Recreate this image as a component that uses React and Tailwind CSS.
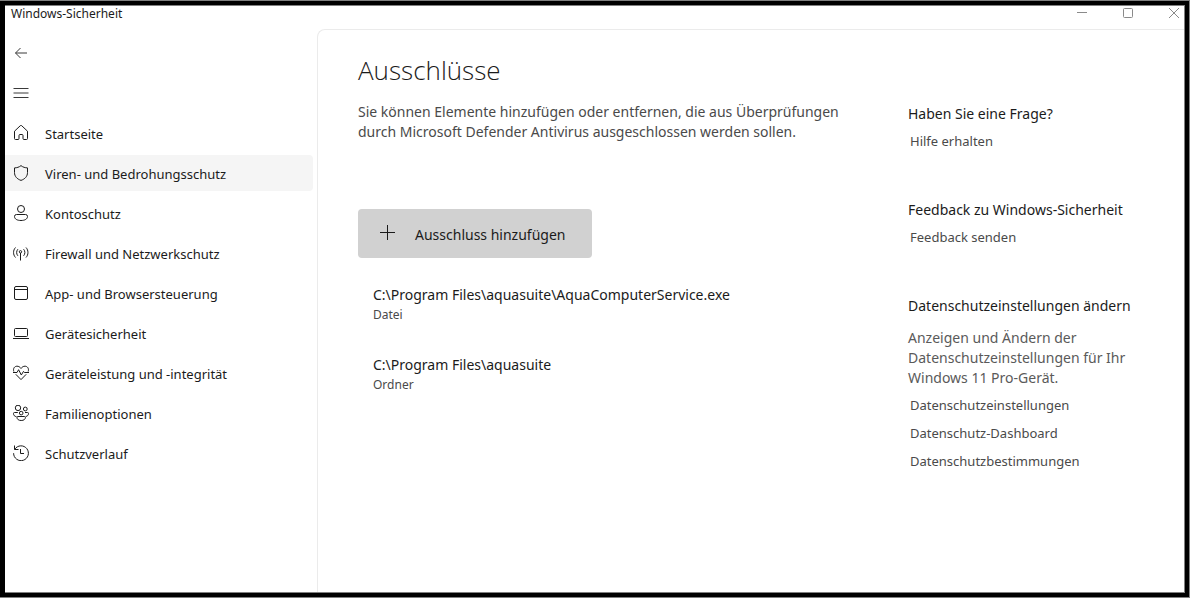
const navItems = [
  {
    label: "Startseite",
    icon: (
      <path d="M1.500 6.200 7.300.7q.7-.6 1.400 0l5.800 5.500v7.300q0 1-1 1H11q-1 0-1-1V10.500q0-1-1-1H7q-1 0-1 1v3q0 1-1 1H2.500q-1 0-1-1Z" />
    ),
  },
  {
    label: "Viren- und Bedrohungsschutz",
    icon: <path d="M8 .6c1.900 1.600 4.100 2.200 6.500 2.300v4.600c0 3.900-2.500 6.500-6.500 7.900-4-1.400-6.500-4-6.500-7.900V2.900C3.900 2.800 6.100 2.200 8 .6Z" />,
    current: true,
  },
  {
    label: "Kontoschutz",
    icon: (
      <>
        <circle cx="8" cy="4" r="3.500" />
        <path d="M3.500 9.500h9q2 0 2 2c0 2.500-2.700 4-6.500 4s-6.500-1.500-6.500-4q0-2 2-2Z" />
      </>
    ),
  },
  {
    label: "Firewall und Netzwerkschutz",
    icon: (
      <>
        <path d="M2.500 2.500c-2.600 2.800-2.600 7.200 0 10M4.900 4.200c-1.700 1.900-1.700 4.700 0 6.600M13 2.500c2.600 2.800 2.600 7.200 0 10M10.600 4.200c1.700 1.900 1.700 4.700 0 6.600M7.500 8v7.500" />
        <circle cx="7.500" cy="6.800" r="1.200" />
      </>
    ),
  },
  {
    label: "App- und Browsersteuerung",
    icon: (
      <>
        <rect x="1.500" y="1.500" width="13" height="13" rx="1.500" />
        <path d="M1.500 4.500h13" />
      </>
    ),
  },
  {
    label: "Gerätesicherheit",
    icon: (
      <>
        <rect x="1.500" y="3.500" width="13" height="8" rx="1" />
        <path d="M0 13.500h16" />
      </>
    ),
  },
  {
    label: "Geräteleistung und -integrität",
    icon: (
      <>
        <path d="M.8 6.500C-.2 3.200 1.800 1.200 4 1.200c1.700 0 3 .8 4 2.300 1-1.500 2.300-2.300 4-2.300 2.200 0 4.200 2 3.200 5.300M2.800 9.300 8 14.600l5.200-5.300" />
        <path d="M0 7.500h4l1.600-2.800L8.300 10l2.200-3.600 1 1.100H16" />
      </>
    ),
  },
  {
    label: "Familienoptionen",
    icon: (
      <>
        <circle cx="5" cy="2.900" r="2.700" />
        <circle cx="12.300" cy="4" r="1.900" />
        <circle cx="8.200" cy="8.100" r="1.800" />
        <path d="M4.800 7.500H1.500Q.5 7.500.5 8.500c0 1.800 1 2.900 3 3.200M12 7.500h2.500q1 0 1 1c0 1.600-1 2.700-2.700 3M5 11.500h6.500q.9 0 .9.900c0 1.900-1.600 3.100-4.200 3.100S4 14.300 4 12.400q0-.9 1-.9Z" />
      </>
    ),
  },
  {
    label: "Schutzverlauf",
    icon: (
      <>
        <path d="M1.800 4.200A7.400 7.400 0 1 1 .6 8.200" />
        <path d="M1.500.5v4h4M7.500 4v4.500H11" />
      </>
    ),
  },
];

const exclusions = [
  { path: "C:\\Program Files\\aquasuite\\AquaComputerService.exe", kind: "Datei" },
  { path: "C:\\Program Files\\aquasuite", kind: "Ordner" },
];

const privacyLinks = ["Datenschutzeinstellungen", "Datenschutz-Dashboard", "Datenschutzbestimmungen"];

function Icon({ children, className = "" }) {
  return (
    <svg
      viewBox="0 0 16 16"
      width="16"
      height="16"
      fill="none"
      stroke="currentColor"
      strokeLinejoin="round"
      aria-hidden="true"
      className={`shrink-0 ${className}`}
    >
      {children}
    </svg>
  );
}

function CaptionButton({ label, children }) {
  return (
    <button type="button" aria-label={label} className="flex w-5 items-center justify-center text-[#8a8a8a]">
      <Icon>{children}</Icon>
    </button>
  );
}

function HelpSection({ title, text, links }) {
  return (
    <section>
      <h2 className="text-sm leading-7 text-[#1b1b1b]">{title}</h2>
      {text && <p className="mb-1 mt-2 max-w-[230px] text-sm leading-5 text-[#5a5a5a]">{text}</p>}
      <ul className="flex flex-col gap-0.5 pl-0.5">
        {links.map((label) => (
          <li key={label}>
            <a href="#" className="block text-[13px] leading-[26px] text-[#4a4a4a]">
              {label}
            </a>
          </li>
        ))}
      </ul>
    </section>
  );
}

export default function App() {
  return (
    <div className="flex min-h-screen border-y border-r border-[#808080] bg-white font-['Noto_Sans','Open_Sans',sans-serif] text-[#1b1b1b]">
      <div className="flex flex-1 border-4 border-l-5 border-black">
        <div className="flex flex-1 flex-col border-y border-r border-[#808080] bg-white">
          <header className="flex h-[23px] justify-between">
            <span className="pl-1.5 text-xs leading-4">Windows-Sicherheit</span>
            <div className="flex h-[14px] gap-[26px]">
              <CaptionButton label="Minimieren">
                <path d="M3 7.500h10" />
              </CaptionButton>
              <CaptionButton label="Maximieren">
                <rect x="3.500" y="3.500" width="9" height="9" rx="1" />
              </CaptionButton>
              <CaptionButton label="Schließen">
                <path d="m3 3 10 10M13 3 3 13" />
              </CaptionButton>
            </div>
          </header>

          <div className="flex flex-1">
            <nav className="w-[312px] shrink-0 pr-1 pt-1.5" aria-label="Navigation">
              <button type="button" aria-label="Zurück" className="flex h-9 w-8 items-center justify-center text-[#3a3a3a]">
                <Icon>
                  <path d="M14 8H2.500M7.500 3l-5 5 5 5" />
                </Icon>
              </button>
              <button type="button" aria-label="Menü" className="mt-1 flex h-9 w-8 items-center justify-center text-[#3a3a3a]">
                <Icon>
                  <path d="M.5 3.500h15M.5 8h15M.5 12.500h15" />
                </Icon>
              </button>
              <ul className="mt-1 flex flex-col gap-1">
                {navItems.map((item) => (
                  <li key={item.label}>
                    <a
                      href="#"
                      aria-current={item.current ? "page" : undefined}
                      className={`flex h-9 items-center gap-4 rounded-r-sm pl-2 text-[13px] leading-5 ${item.current ? "bg-[#f5f5f5]" : ""}`}
                    >
                      <Icon>{item.icon}</Icon>
                      <span className="pt-0.5">{item.label}</span>
                    </a>
                  </li>
                ))}
              </ul>
            </nav>

            <div className="flex flex-1 items-start rounded-tl-lg border-l border-t border-[#ebebeb] pl-10">
              <main className="min-w-0 flex-1 pt-6">
                <h1 className="font-['Open_Sans',sans-serif] text-[26px] font-light leading-8">Ausschlüsse</h1>
                <p className="mt-4 max-w-[500px] text-sm leading-5 text-[#4a4a4a]">
                  Sie können Elemente hinzufügen oder entfernen, die aus Überprüfungen durch Microsoft Defender Antivirus
                  ausgeschlossen werden sollen.
                </p>
                <button
                  type="button"
                  className="mt-[67px] flex h-[49px] items-center gap-5 rounded-sm bg-[#d1d1d1] pl-[21px] pr-[27px] text-sm"
                >
                  <Icon className="mb-1">
                    <path d="M1 8.500h15M8.500 1v15" />
                  </Icon>
                  <span className="pt-0.5">Ausschluss hinzufügen</span>
                </button>
                <ul className="mt-[27px] flex flex-col gap-[30px] pl-[15px]">
                  {exclusions.map((item) => (
                    <li key={item.path}>
                      <div className="text-sm leading-5">{item.path}</div>
                      <div className="text-xs leading-5 text-[#4a4a4a]">{item.kind}</div>
                    </li>
                  ))}
                </ul>
              </main>

              <aside className="flex w-[276px] shrink-0 flex-col gap-[42px] pt-[70px]">
                <HelpSection title="Haben Sie eine Frage?" links={["Hilfe erhalten"]} />
                <HelpSection title="Feedback zu Windows-Sicherheit" links={["Feedback senden"]} />
                <HelpSection
                  title="Datenschutzeinstellungen ändern"
                  text="Anzeigen und Ändern der Datenschutzeinstellungen für Ihr Windows 11 Pro-Gerät."
                  links={privacyLinks}
                />
              </aside>
            </div>
          </div>
        </div>
      </div>
    </div>
  );
}
